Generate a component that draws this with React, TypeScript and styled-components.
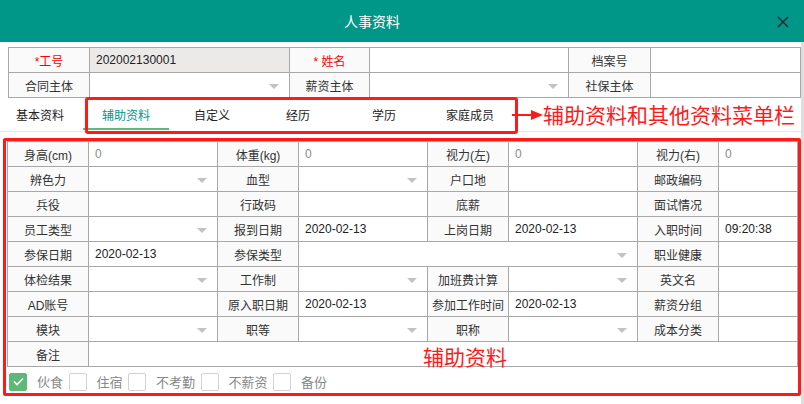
import styled, { createGlobalStyle } from "styled-components";

const GlobalStyle = createGlobalStyle`
  body {
    margin: 0;
    background: #ffffff;
    font-family: "Liberation Sans", "Noto Sans CJK SC", sans-serif;
  }
`;

type Cell =
  | { kind: "label"; text: string; required?: boolean }
  | {
      kind: "value";
      text?: string;
      select?: boolean;
      span?: number;
      muted?: boolean;
      readonly?: boolean;
    };

const lb = (text: string, required = false): Cell => ({ kind: "label", text, required });
const v = (text = "", opts: { select?: boolean; span?: number; muted?: boolean; readonly?: boolean } = {}): Cell => ({
  kind: "value",
  text,
  ...opts,
});
const sel = (span?: number): Cell => v("", { select: true, span });
const date = "2020-02-13";

const topRows: Cell[][] = [
  [lb("*工号", true), v("202002130001", { readonly: true }), lb("* 姓名", true), v(), lb("档案号"), v()],
  [lb("合同主体"), sel(), lb("薪资主体"), sel(), lb("社保主体"), v()],
];

const mainRows: Cell[][] = [
  [lb("身高(cm)"), v("0", { muted: true }), lb("体重(kg)"), v("0", { muted: true }), lb("视力(左)"), v("0", { muted: true }), lb("视力(右)"), v("0", { muted: true })],
  [lb("辨色力"), sel(), lb("血型"), sel(), lb("户口地"), v(), lb("邮政编码"), v()],
  [lb("兵役"), v(), lb("行政码"), v(), lb("底薪"), v(), lb("面试情况"), v()],
  [lb("员工类型"), sel(), lb("报到日期"), v(date), lb("上岗日期"), v(date), lb("入职时间"), v("09:20:38")],
  [lb("参保日期"), v(date), lb("参保类型"), sel(3), lb("职业健康"), v()],
  [lb("体检结果"), sel(), lb("工作制"), sel(), lb("加班费计算"), sel(), lb("英文名"), v()],
  [lb("AD账号"), v(), lb("原入职日期"), v(date), lb("参加工作时间"), v(date), lb("薪资分组"), v()],
  [lb("模块"), sel(), lb("职等"), sel(), lb("职称"), sel(), lb("成本分类"), v()],
  [lb("备注"), v("", { span: 7 })],
];

const tabs = ["基本资料", "辅助资料", "自定义", "经历", "学历", "家庭成员"];
const checks = [
  { text: "伙食", checked: true },
  { text: "住宿", checked: false },
  { text: "不考勤", checked: false },
  { text: "不薪资", checked: false },
  { text: "备份", checked: false },
];

const Dialog = styled.div`
  width: 804px;
  height: 404px;
  overflow: hidden;
  display: flex;
  flex-direction: column;
  background: #fff;
`;

const Header = styled.div`
  height: 42px;
  flex-shrink: 0;
  display: flex;
  align-items: center;
  background: #009688;
  padding-right: 15px;
`;

const Title = styled.div`
  flex: 1;
  text-align: center;
  padding-right: 33px;
  color: #fff;
  font-size: 14px;
`;

const Close = styled.button`
  width: 12px;
  height: 12px;
  padding: 0;
  border: none;
  background: none;
  display: flex;
  margin-top: 1px;
  cursor: pointer;
`;

const Body = styled.div`
  flex: 1;
  display: flex;
  min-height: 0;
`;

const Content = styled.div`
  flex: 1;
  padding-top: 5px;
  display: flex;
  flex-direction: column;
`;

const Scroll = styled.div`
  width: 3px;
  background: #dedede;
`;

const Grid = styled.div<{ $cols: string }>`
  display: grid;
  grid-template-columns: ${(p) => p.$cols};
  grid-auto-rows: 24px;
  gap: 1px;
  padding: 1px;
  background: #a8a8a8;
`;

const TopGrid = styled(Grid)`
  margin-left: 8px;
`;

const MainGrid = styled(Grid)`
  margin-left: 1px;
`;

const LabelCell = styled.div<{ $required?: boolean }>`
  background: #fafafa;
  display: flex;
  align-items: center;
  justify-content: center;
  font-size: 12px;
  color: ${(p) => (p.$required ? "#ff0000" : "#333")};
  white-space: nowrap;
`;

const ValueCell = styled.div<{ $span?: number; $muted?: boolean; $readonly?: boolean }>`
  grid-column: span ${(p) => p.$span ?? 1};
  background: ${(p) => (p.$readonly ? "#ece9e9" : "#fff")};
  display: flex;
  align-items: center;
  justify-content: space-between;
  padding: 0 10px 0 6px;
  font-size: 12px;
  color: ${(p) => (p.$muted ? "#8a8a8a" : "#222")};
`;

const Caret = styled.span`
  width: 0;
  height: 0;
  margin-top: 2px;
  border-left: 5px solid transparent;
  border-right: 5px solid transparent;
  border-top: 5px solid #c2c2c2;
`;

const TabsBar = styled.div`
  position: relative;
  height: 34px;
  box-sizing: border-box;
  border-bottom: 1px solid #e6e6e6;
  display: flex;
  margin-left: -3px;
`;

const Tab = styled.div<{ $active?: boolean }>`
  width: 86px;
  height: 32px;
  box-sizing: border-box;
  padding-top: 2px;
  display: flex;
  align-items: center;
  justify-content: center;
  font-size: 12px;
  color: ${(p) => (p.$active ? "#009688" : "#222")};
  border-bottom: 2px solid ${(p) => (p.$active ? "#5fb878" : "transparent")};
`;

const TabsFrame = styled.div`
  position: absolute;
  left: 88px;
  top: -1px;
  width: 433px;
  height: 37px;
  box-sizing: border-box;
  border: 3px solid #ff1a1a;
  border-radius: 3px;
  pointer-events: none;
`;

const ArrowMark = styled.svg`
  position: absolute;
  left: 515px;
  top: 11px;
`;

const Note = styled.div`
  position: absolute;
  color: #ff1a1a;
  font-size: 21px;
  line-height: 21px;
  white-space: nowrap;
  font-family: "Noto Sans CJK SC", sans-serif;
`;

const TabsNote = styled(Note)`
  left: 546px;
  top: 6px;
`;

const Highlight = styled.div`
  position: relative;
  margin: 6px 0 0 3px;
  width: 798px;
  height: 258px;
  box-sizing: border-box;
  border: 3px solid #ff1a1a;
  border-radius: 2px;
  overflow: hidden;
`;

const RemarkNote = styled(Note)`
  left: 417px;
  top: 205px;
`;

const CheckRow = styled.div`
  display: flex;
  align-items: center;
  padding: 5px 0 0 3px;
`;

const CheckItem = styled.label`
  display: flex;
  align-items: center;
  margin-right: 5.5px;
  font-size: 13px;
  color: #888;
`;

const Box = styled.span<{ $checked?: boolean }>`
  width: 18px;
  height: 18px;
  box-sizing: border-box;
  border-radius: 2px;
  margin-right: 10px;
  display: flex;
  align-items: center;
  justify-content: center;
  border: 1px solid ${(p) => (p.$checked ? "#5fb878" : "#d2d2d2")};
  background: ${(p) => (p.$checked ? "#5fb878" : "#fff")};
`;

const renderCell = (c: Cell, i: number) =>
  c.kind === "label" ? (
    <LabelCell key={i} $required={c.required}>
      {c.text}
    </LabelCell>
  ) : (
    <ValueCell key={i} $span={c.span} $muted={c.muted} $readonly={c.readonly}>
      <span>{c.text}</span>
      {c.select && <Caret />}
    </ValueCell>
  );

const App = () => {
  return (
    <>
      <GlobalStyle />
      <Dialog>
        <Header>
          <Title>人事资料</Title>
          <Close aria-label="close">
            <svg width="12" height="12" viewBox="0 0 12 12">
              <path d="M1 1 L11 11 M11 1 L1 11" stroke="#263238" strokeWidth="1.6" fill="none" />
            </svg>
          </Close>
        </Header>
        <Body>
          <Content>
            <TopGrid $cols="80px 199px 79px 198px 81px 1fr">
              {topRows.flat().map(renderCell)}
            </TopGrid>
            <TabsBar>
              {tabs.map((t, i) => (
                <Tab key={t} $active={i === 1}>
                  {t}
                </Tab>
              ))}
              <TabsFrame />
              <ArrowMark width="31" height="12" viewBox="0 0 31 12">
                <path d="M0 6 H22" stroke="#ff1a1a" strokeWidth="2" />
                <polygon points="19,1 31,6 19,11" fill="#ff1a1a" />
              </ArrowMark>
              <TabsNote>辅助资料和其他资料菜单栏</TabsNote>
            </TabsBar>
            <Highlight>
              <MainGrid $cols="80px 128px 80px 128px 80px 128px 80px 1fr">
                {mainRows.flat().map(renderCell)}
              </MainGrid>
              <CheckRow>
                {checks.map((c) => (
                  <CheckItem key={c.text}>
                    <Box $checked={c.checked}>
                      {c.checked && (
                        <svg width="11" height="9" viewBox="0 0 11 9">
                          <path d="M1 4.5 L4 7.5 L10 1.5" stroke="#fff" strokeWidth="1.6" fill="none" />
                        </svg>
                      )}
                    </Box>
                    {c.text}
                  </CheckItem>
                ))}
              </CheckRow>
              <RemarkNote>辅助资料</RemarkNote>
            </Highlight>
          </Content>
          <Scroll />
        </Body>
      </Dialog>
    </>
  );
};

export default App;
